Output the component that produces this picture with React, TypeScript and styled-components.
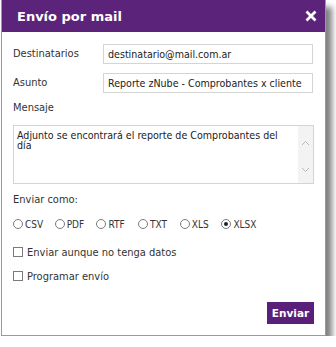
import React from 'react';
import styled, { createGlobalStyle } from 'styled-components';

const GlobalStyle = createGlobalStyle`
  html, body {
    margin: 0;
    padding: 0;
    background: #ffffff;
  }
  body {
    font-family: "DejaVu Sans Condensed", "DejaVu Sans", sans-serif;
    font-stretch: condensed;
    color: #333333;
  }
`;

const Dialog = styled.div`
  margin-left: 1px;
  width: 323px;
  background: #ffffff;
  border: 1px solid #9a9a9a;
  border-top: 0;
  box-shadow: 6px 7px 6px rgba(0, 0, 0, 0.5);
`;

const Header = styled.div`
  display: flex;
  align-items: center;
  justify-content: space-between;
  height: 32px;
  padding: 0 6px 0 15px;
  background: #5b2379;
  color: #ffffff;
`;

const Title = styled.h1`
  margin: 0;
  font-family: "DejaVu Sans", sans-serif;
  font-stretch: normal;
  font-size: 13px;
  font-weight: bold;
`;

const Close = styled.button`
  display: flex;
  align-items: center;
  justify-content: center;
  width: 16px;
  height: 16px;
  padding: 0;
  border: 0;
  background: transparent;
  cursor: pointer;
`;

const Body = styled.div`
  display: flex;
  flex-direction: column;
  padding: 12px 11px 11px 11px;
  font-size: 11px;
`;

const FieldRow = styled.div<{ $gap?: number }>`
  display: grid;
  grid-template-columns: 90px 1fr;
  align-items: center;
  margin-top: ${p => p.$gap ?? 0}px;
`;

const Label = styled.label<{ $gap?: number }>`
  display: block;
  line-height: 14px;
  margin-top: ${p => p.$gap ?? 0}px;
  color: #333333;
`;

const TextInput = styled.input`
  box-sizing: border-box;
  width: 210px;
  height: 20px;
  padding: 0 4px;
  border: 1px solid #d4d4d4;
  font: inherit;
  font-size: 10.6px;
  color: #222222;
  outline: none;
`;

const MessageBox = styled.div`
  display: flex;
  height: 59px;
  margin-top: 10px;
  border: 1px solid #d4d4d4;
  box-sizing: border-box;
`;

const MessageText = styled.textarea`
  flex: 1;
  padding: 4px 3px;
  border: 0;
  resize: none;
  overflow: hidden;
  font: inherit;
  font-size: 10.6px;
  line-height: 10px;
  color: #222222;
  outline: none;
`;

const ScrollTrack = styled.div`
  display: flex;
  flex-direction: column;
  justify-content: space-between;
  align-items: center;
  width: 15px;
  padding: 14px 0 10px;
  background: #f3f3f3;
`;

const OptionRow = styled.div`
  display: grid;
  grid-template-columns: repeat(5, 41.7px) auto;
  align-items: center;
  height: 14px;
  margin-top: 10px;
`;

const Option = styled.label`
  display: flex;
  align-items: center;
  gap: 2px;
  font-size: 10px;
  color: #333333;
`;

const RadioMark = styled.span<{ $checked?: boolean }>`
  display: flex;
  align-items: center;
  justify-content: center;
  box-sizing: border-box;
  width: 10px;
  height: 10px;
  border: 1px solid #7a7a7a;
  border-radius: 50%;
  &::after {
    content: '';
    display: ${p => (p.$checked ? 'block' : 'none')};
    width: 4px;
    height: 4px;
    border-radius: 50%;
    background: #222222;
  }
`;

const CheckRow = styled.label<{ $gap: number }>`
  display: flex;
  align-items: center;
  gap: 4px;
  height: 14px;
  margin-top: ${p => p.$gap}px;
  color: #333333;
`;

const CheckMark = styled.span`
  box-sizing: border-box;
  width: 10px;
  height: 10px;
  border: 1px solid #7a7a7a;
`;

const Footer = styled.div`
  display: flex;
  justify-content: flex-end;
  margin-top: 19px;
`;

const SendButton = styled.button`
  width: 47px;
  height: 22px;
  padding: 0;
  border: 0;
  background: #5a1f78;
  color: #ffffff;
  font-family: "DejaVu Sans", sans-serif;
  font-stretch: normal;
  font-size: 10.5px;
  font-weight: bold;
  cursor: pointer;
`;

const formats = ['CSV', 'PDF', 'RTF', 'TXT', 'XLS', 'XLSX'];

const Chevron: React.FC<{ up?: boolean }> = ({ up }) => (
  <svg width="9" height="6" viewBox="0 0 9 6">
    <path
      d={up ? 'M1 5 L4.5 1.5 L8 5' : 'M1 1 L4.5 4.5 L8 1'}
      fill="none"
      stroke="#b8b8b8"
      strokeWidth="1"
    />
  </svg>
);

const App: React.FC = () => (
  <>
    <GlobalStyle />
    <Dialog>
      <Header>
        <Title>Envío por mail</Title>
        <Close aria-label="Cerrar">
          <svg width="12" height="12" viewBox="0 0 12 12">
            <path d="M1.5 1.5 L10.5 10.5 M10.5 1.5 L1.5 10.5" stroke="#ffffff" strokeWidth="2.8" />
          </svg>
        </Close>
      </Header>
      <Body>
        <FieldRow>
          <Label>Destinatarios</Label>
          <TextInput defaultValue="destinatario@mail.com.ar" />
        </FieldRow>
        <FieldRow $gap={9}>
          <Label>Asunto</Label>
          <TextInput defaultValue="Reporte zNube - Comprobantes x cliente" />
        </FieldRow>
        <Label $gap={8}>Mensaje</Label>
        <MessageBox>
          <MessageText defaultValue="Adjunto se encontrará el reporte de Comprobantes del día" />
          <ScrollTrack>
            <Chevron up />
            <Chevron />
          </ScrollTrack>
        </MessageBox>
        <Label $gap={9}>Enviar como:</Label>
        <OptionRow>
          {formats.map(f => (
            <Option key={f}>
              <RadioMark $checked={f === 'XLSX'} />
              {f}
            </Option>
          ))}
        </OptionRow>
        <CheckRow $gap={14}>
          <CheckMark />
          Enviar aunque no tenga datos
        </CheckRow>
        <CheckRow $gap={10}>
          <CheckMark />
          Programar envío
        </CheckRow>
        <Footer>
          <SendButton>Enviar</SendButton>
        </Footer>
      </Body>
    </Dialog>
  </>
);

export default App;
